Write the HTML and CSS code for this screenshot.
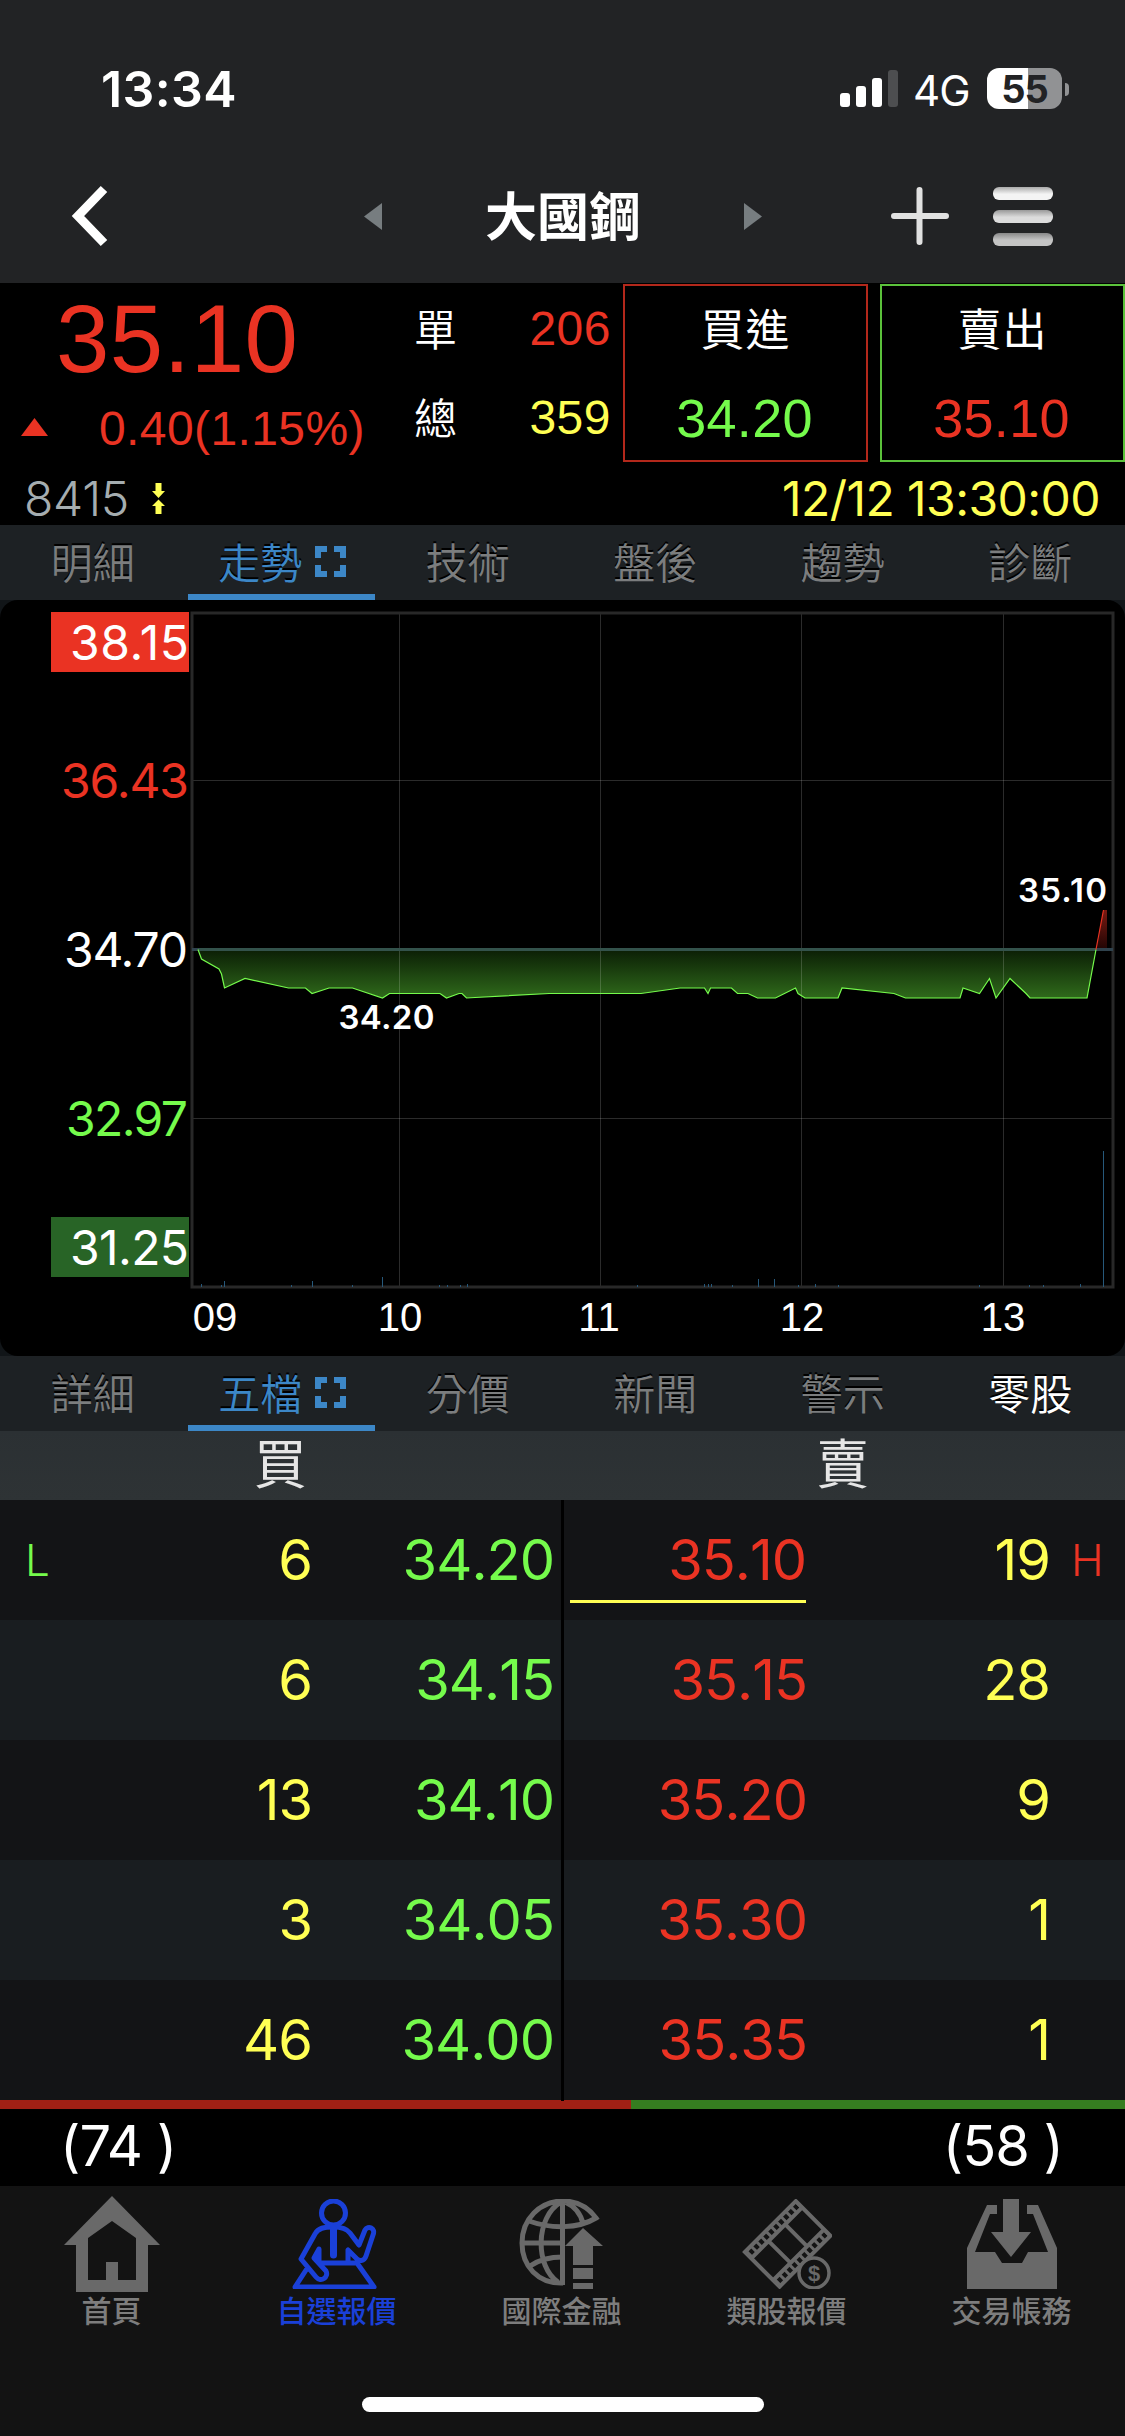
FILE: index.html
```html
<!DOCTYPE html>
<html lang="zh-Hant">
<head>
<meta charset="utf-8">
<title>大國鋼</title>
<link rel="stylesheet" href="styles.css">
</head>
<body>
<header class="top">
  <div class="status">
    <span class="clock">13:34</span>
    <svg class="signal" width="58" height="38" viewBox="0 0 58 38">
      <g fill="#fff"><rect y="23" width="10" height="14" rx="3"/><rect x="16" y="16" width="10" height="21" rx="3"/><rect x="32" y="8" width="10" height="29" rx="3"/></g>
      <rect x="48" width="10" height="37" rx="3" fill="#4d4e50"/>
    </svg>
    <span class="net">4G</span>
    <span class="battery"><span class="pct">55</span></span>
    <span class="nub"></span>
  </div>
  <div class="titlebar">
    <svg class="back" width="42" height="64" viewBox="0 0 42 64"><path d="M35 5 9 32 35 59" fill="none" stroke="#fff" stroke-width="9"/></svg>
    <svg class="prev" width="18" height="27" viewBox="0 0 18 27"><path d="M18 0v27L0 13.5z" fill="#777d80"/></svg>
    <h1>大國鋼</h1>
    <svg class="next" width="18" height="27" viewBox="0 0 18 27"><path d="M0 0v27l18-13.5z" fill="#777d80"/></svg>
    <svg class="plus" width="58" height="58" viewBox="0 0 58 58"><path d="M3 29h52M28.5 3v52" stroke="#e1e1e1" stroke-width="6" stroke-linecap="round"/></svg>
    <div class="menu"><i></i><i></i><i></i></div>
  </div>
</header>

<section class="quote">
  <div class="main-quote">
    <div class="last">35.10</div>
    <div class="change"><svg width="27" height="18" viewBox="0 0 27 18"><path d="M13.5 0 27 18H0z" fill="#ea3323"/></svg><span>0.40(1.15%)</span></div>
  </div>
  <div class="volumes">
    <span class="k">單</span><span class="v red">206</span>
    <span class="k">總</span><span class="v yellow">359</span>
  </div>
  <div class="deal buy"><span>買進</span><b class="green">34.20</b></div>
  <div class="deal sell"><span>賣出</span><b class="red">35.10</b></div>
</section>
<div class="code-row">
  <span class="code">8415</span>
  <svg width="13" height="31" viewBox="0 0 13 31"><path d="M3.500 0h6v8H13l-6.500 7L0 8h3.500zM3.500 31h6v-8H13l-6.500-6.500L0 23h3.500z" fill="#ffff54"/></svg>
  <span class="stamp">12/12 13:30:00</span>
</div>

<nav class="tabs">
  <span>明細</span>
  <span class="on">走勢<svg width="31" height="31" viewBox="0 0 31 31"><path d="M3 12V3h9M19 3h9v9M28 19v9h-9M12 28H3v-9" fill="none" stroke="#3c87c7" stroke-width="6"/></svg></span>
  <span>技術</span><span>盤後</span><span>趨勢</span><span>診斷</span>
</nav>

<section class="chart">
<svg width="1125" height="756" viewBox="0 600 1125 756">
  <defs>
    <linearGradient id="dn" x1="0" y1="0" x2="0" y2="1"><stop offset="0" stop-color="#0b1e05"/><stop offset="1" stop-color="#2f6a1b"/></linearGradient>
    <linearGradient id="up" x1="0" y1="0" x2="0" y2="1"><stop offset="0" stop-color="#7a1a12"/><stop offset="1" stop-color="#200504"/></linearGradient>
  </defs>
  <path fill="url(#dn)" d="M198 949.500 201.500 959 219 969 221.500 974 224.500 988 245 978.500 288.500 988H305.500L312 993.500 329 988H352.500L382.500 998 389.500 993.500H440L446.500 998 459 993.500H462L466.500 998 475 997.500 549 993.500H641L680 988H704.500L708 993.500 710.500 988H731.500L737.500 993.500H748L757.500 998H775.500L795.500 988 798 993.500 805 998H838L842 988 894 993.500 905.500 998H960L963 988 979.500 993.500 989.500 978.500 996 998 1010 978.500 1026 993.500 1030 998H1087L1096 949.500z"/>
  <path fill="url(#up)" d="M1096 949.500 1103.500 910H1107V949.500z"/>
  <g fill="none" stroke="#fff" stroke-opacity=".17">
    <path d="M399.500 612V1287M600.500 612V1287M801.500 612V1287M1003.500 612V1287M192 780.500H1113M192 1118.500H1113"/>
  </g>
  <path d="M192 613H1113V1287H192z" fill="none" stroke="#282828" stroke-width="3"/>
  <path d="M192 949.500H1113" stroke="#2f424d" stroke-width="3"/>
  <path d="M198 949.500H1096" stroke="#33524b" stroke-width="3"/>
  <path fill="none" stroke="#75fb4c" stroke-width="1.200" d="M198 949.500 201.500 959 219 969 221.500 974 224.500 988 245 978.500 288.500 988H305.500L312 993.500 329 988H352.500L382.500 998 389.500 993.500H440L446.500 998 459 993.500H462L466.500 998 475 997.500 549 993.500H641L680 988H704.500L708 993.500 710.500 988H731.500L737.500 993.500H748L757.500 998H775.500L795.500 988 798 993.500 805 998H838L842 988 894 993.500 905.500 998H960L963 988 979.500 993.500 989.500 978.500 996 998 1010 978.500 1026 993.500 1030 998H1087L1096 949.500"/>
  <path d="M1096 949.500 1103.500 910" stroke="#ea3323" stroke-width="1.200"/>
  <path d="M224.500 1287v-6M312.500 1287v-6M382.500 1287v-10M758.500 1287v-8M774.500 1287v-8M1103.500 1287V1151M201.500 1287v-3M221.500 1287v-2M291.500 1287v-2M352.500 1287v-2M439.500 1287v-2M447.500 1287v-2M460.500 1287v-2M467.500 1287v-3M637.500 1287v-2M704.500 1287v-3M708.500 1287v-3M711.500 1287v-3M732.500 1287v-2M798.500 1287v-2M815.500 1287v-3M838.500 1287v-2M979.500 1287v-2M1029.500 1287v-2M1043.500 1287v-2M1080.500 1287v-3" stroke="#26587a"/>
  <rect x="51" y="612" width="138" height="60" fill="#ea3323"/>
  <rect x="51" y="1217" width="138" height="60" fill="#286426"/>
  <g class="price-labels" text-anchor="end">
    <text x="189" y="659.500" fill="#fff" textLength="119">38.15</text>
    <text x="189" y="798" fill="#ea3323" textLength="128">36.43</text>
    <text x="188" y="967" fill="#fff" textLength="124">34.70</text>
    <text x="188" y="1136" fill="#75fb4c" textLength="122">32.97</text>
    <text x="189" y="1265" fill="#fff" textLength="119">31.25</text>
  </g>
  <g class="hour-labels" text-anchor="middle">
    <text x="215" y="1331">09</text><text x="400" y="1331">10</text><text x="599" y="1331">11</text><text x="802" y="1331">12</text><text x="1003" y="1331">13</text>
  </g>
  <g class="marks">
    <text x="1018" y="901.500" textLength="89">35.10</text>
    <text x="338.500" y="1028.500" textLength="96">34.20</text>
  </g>
</svg>
</section>

<nav class="tabs">
  <span>詳細</span>
  <span class="on">五檔<svg width="31" height="31" viewBox="0 0 31 31"><path d="M3 12V3h9M19 3h9v9M28 19v9h-9M12 28H3v-9" fill="none" stroke="#3c87c7" stroke-width="6"/></svg></span>
  <span>分價</span><span>新聞</span><span>警示</span><span class="bright">零股</span>
</nav>
<div class="book-head"><span>買</span><span>賣</span></div>
<section class="book">
  <div class="row">
    <div class="side bid"><small class="green">L</small><span class="qty">6</span><span class="price">34.20</span></div>
    <div class="side ask"><span class="price hit">35.10</span><span class="qty">19</span><small class="red">H</small></div>
  </div>
  <div class="row">
    <div class="side bid"><small></small><span class="qty">6</span><span class="price">34.15</span></div>
    <div class="side ask"><span class="price">35.15</span><span class="qty">28</span><small></small></div>
  </div>
  <div class="row">
    <div class="side bid"><small></small><span class="qty">13</span><span class="price">34.10</span></div>
    <div class="side ask"><span class="price">35.20</span><span class="qty">9</span><small></small></div>
  </div>
  <div class="row">
    <div class="side bid"><small></small><span class="qty">3</span><span class="price">34.05</span></div>
    <div class="side ask"><span class="price">35.30</span><span class="qty">1</span><small></small></div>
  </div>
  <div class="row">
    <div class="side bid"><small></small><span class="qty">46</span><span class="price">34.00</span></div>
    <div class="side ask"><span class="price">35.35</span><span class="qty">1</span><small></small></div>
  </div>
</section>
<div class="ratio"><i style="width:56.06%"></i></div>
<div class="sums"><span>(74 )</span><span>(58 )</span></div>

<footer class="dock">
  <nav>
    <a><svg width="96" height="96" viewBox="0 0 96 96"><path fill="#696969" fill-rule="evenodd" d="M48 0 96 49H84V96H12V49H0zM48 25 24 42V84H42V66H54V84H72V42z"/></svg><span>首頁</span></a>
    <a class="on"><svg width="90" height="90" viewBox="0 0 90 90"><g fill="none" stroke="#1a40d8" stroke-width="5" stroke-linejoin="round"><circle cx="41.500" cy="14" r="12"/><path d="M41.500 28C32 28 26 29 23 35L9 60 24 78C29 84 37 78 34 72L22 59 27 50V64H65L82 88H3L16 68M41.500 28C51 28 55 30 58 34L67 46 73 31C76 26 84 29 81 36L74 57C72 63 67 62 65 60L56 51V64"/><path d="M41.500 30V56" stroke-width="7" stroke-linecap="round"/></g></svg><span>自選報價</span></a>
    <a><svg width="90" height="90" viewBox="0 0 90 90"><g fill="none" stroke="#696969" stroke-width="5"><path d="M46 84C21 85 5 67 5 44 5 20 23 2 46 2 60 2 71 8 79 19 61 30 34 30 12 22M5 44H46M13 67C23 60 34 58 46 58M44 3C18 18 18 68 41 83M48 3C57 7 64 15 66 25"/><path d="M45.500 2V86"/></g><path fill="#696969" d="M66 29 86 47H76V66H56V47H48zM56 69h20v11H56zM56 84h20v6H56z"/></svg><span>國際金融</span></a>
    <a><svg width="90" height="90" viewBox="0 0 90 90"><g transform="translate(1.500 53) rotate(-45)" fill="none" stroke="#696969" stroke-width="4"><path d="M1 1H73V50H1zM1 10H73M1 41H73M25.500 10V41M49 10V41"/><path d="M1 5.500H73M1 45.500H73" stroke-width="7" stroke-dasharray="3 4"/></g><circle cx="72" cy="74" r="15" fill="#131313" stroke="#696969" stroke-width="3.500"/><text class="coin" x="72" y="82" text-anchor="middle">$</text></svg><span>類股報價</span></a>
    <a><svg width="90" height="90" viewBox="0 0 90 90"><path fill="#696969" d="M36 0H52V33H64L44 58 24 33H36zM30 6H20L0 49V90H90V49L71 6H60V15H66L81 53H61L55 64H35L28 53H8L23 15H30z"/></svg><span>交易帳務</span></a>
  </nav>
  <div class="home-indicator"></div>
</footer>
</body>
</html>
```
FILE: styles.css
```css
* { box-sizing: border-box; }
body {
  margin: 0;
  width: 1125px;
  height: 2436px;
  overflow: hidden;
  background: #000;
  color: #fff;
  font-family: Inter, "Noto Sans CJK TC", sans-serif;
}
svg { display: block; flex: none; }
.red { color: #ea3323; }
.green { color: #75fb4c; }
.yellow { color: #ffff54; }

.top { height: 283px; background: #222325; }
.status { display: flex; height: 155px; padding: 68px 56px 0 101px; align-items: flex-start; }
.clock { width: 739px; font-size: 50px; line-height: 42px; font-weight: 600; letter-spacing: .4px; }
.signal { margin-top: 2px; }
.net { width: 89px; padding-left: 15px; font-size: 42px; line-height: 46px; letter-spacing: -1px; }
.battery {
  width: 75px;
  height: 41px;
  border-radius: 12px;
  background: linear-gradient(90deg, #fff 55%, #919294 55%);
  text-align: center;
}
.pct { display: block; color: #222325; font-size: 38px; line-height: 42px; font-weight: 700; letter-spacing: -1px; }
.nub { width: 4px; height: 13px; margin: 15px 0 0 3px; background: #919294; border-radius: 0 4px 4px 0; }

.titlebar { display: flex; align-items: center; height: 122px; padding-left: 69px; }
.prev { margin-left: 253px; }
.titlebar h1 { width: 362px; margin: 0; padding-top: 3px; text-align: center; font-size: 52px; line-height: 60px; font-weight: 700; }
.plus { margin-left: 129px; }
.menu { display: grid; gap: 10px; width: 60px; margin-left: 44px; }
.menu i { height: 13px; border-radius: 6px; background: linear-gradient(#aaa, #f4f4f4 55%); }
.menu i:nth-child(2) { background: linear-gradient(#999, #dcdcdc 55%); }
.menu i:nth-child(3) { background: linear-gradient(#888, #c4c4c4 55%); }

.quote { display: flex; height: 180px; padding-top: 1px; font-family: "Liberation Sans", "Noto Sans CJK TC", sans-serif; }
.main-quote { width: 400px; }
.last { padding-left: 56px; color: #ea3323; font-size: 96px; line-height: 110px; letter-spacing: .4px; }
.change { display: flex; align-items: center; height: 66px; padding-left: 21px; color: #ea3323; font-size: 48px; line-height: 66px; }
.change span { margin-left: 51px; padding-top: 3px; letter-spacing: .4px; }
.volumes { display: grid; grid-template-columns: 68px 145px; grid-template-rows: 89px 89px; align-items: center; width: 223px; padding-left: 14px; }
.k { padding-bottom: 4px; font-size: 43px; font-weight: 350; }
.v { font-size: 48px; text-align: right; padding-right: 16px; letter-spacing: .5px; }
.deal { display: grid; grid-template-rows: 88px 88px; width: 245px; height: 178px; border: 2px solid #b3281b; text-align: center; align-items: center; }
.deal span { padding-bottom: 6px; font-size: 44px; font-weight: 400; letter-spacing: 1px; }
.deal b { padding-right: 2px; font-size: 54px; font-weight: 400; letter-spacing: .3px; }
.sell { margin-left: 12px; border-color: #5bc23b; }

.code-row { display: flex; align-items: center; height: 62px; padding: 9px 25px 0 24px; font-size: 48px; line-height: 53px; }
.code { width: 128px; color: #a5adb0; font-weight: 350; letter-spacing: -.3px; }
.stamp { margin-left: auto; color: #ffff54; letter-spacing: -.55px; }

.tabs {
  display: grid;
  grid-template-columns: repeat(6, 1fr);
  height: 75px;
  background: #1d2124;
  color: #7b7d7e;
  font-size: 42px;
  font-weight: 350;
  text-shadow: 0 -2px #000;
}
.tabs span { display: flex; justify-content: center; align-items: center; padding: 0 2px 5px 0; }
.tabs .on { color: #3c87c7; border-bottom: 6px solid #3c87c7; padding: 1px 0 0 2px; gap: 13px; }
.tabs .on svg { margin-top: 2px; }
.tabs .bright { color: #fff; }

.chart { height: 756px; background: #111518; }
.chart svg { background: #000; border-radius: 18px; }
.price-labels { font-size: 48px; }
.hour-labels { font: 40px "Liberation Sans", sans-serif; fill: #fff; }
.marks { font-size: 33px; font-weight: 600; fill: #fff; }

.book-head { display: grid; grid-template-columns: 1fr 1fr; height: 69px; background: linear-gradient(#2b3033, #2e3335); color: #e6e6e6; font-size: 53px; line-height: 69px; text-align: center; }
.book-head span { padding-right: 2px; }
.row { display: grid; grid-template-columns: 563px 562px; height: 120px; background: #131416; font-size: 56px; line-height: 121px; }
.row:nth-child(even) { background: #191d20; }
.side { display: grid; text-align: right; letter-spacing: -1px; font-kerning: none; }
.bid { grid-template-columns: 99px 213px 242px; border-right: 2px solid #000; }
.ask { grid-template-columns: 243px 243px 76px; border-left: 1px solid #000; }
.side small { font-size: 44px; font-weight: 300; }
.bid small { text-align: left; padding-left: 25px; }
.ask small { text-align: left; padding-left: 21px; }
.qty { color: #ffff54; }
.bid .price { color: #75fb4c; }
.ask .price { color: #ea3323; }
.ask .hit { margin: 0 1px 0 6px; height: 103px; border-bottom: 3px solid #ffff54; }

.ratio { height: 9px; background: #357d20; }
.ratio i { display: block; height: 9px; background: #a02015; }
.sums { display: flex; justify-content: space-between; height: 77px; padding: 0 62px 0 60px; font-size: 56px; line-height: 75px; letter-spacing: -1px; }

.dock { height: 250px; background: #131313; }
.dock nav { display: grid; grid-template-columns: repeat(5, 1fr); height: 211px; }
.dock a { display: flex; flex-direction: column; align-items: center; padding: 13px 2px 0 0; color: #7d7d7d; font-size: 30px; line-height: 36px; font-weight: 500; }
.dock a span { padding-top: 4px; }
.dock a:first-child { padding-top: 10px; }
.dock a:first-child svg { margin-bottom: -3px; }
.dock .on { color: #1a40d8; }
.coin { font: 700 22px "Liberation Sans", sans-serif; fill: #696969; }
.home-indicator { width: 402px; height: 15px; margin: 0 auto; border-radius: 8px; background: #fff; }
```
